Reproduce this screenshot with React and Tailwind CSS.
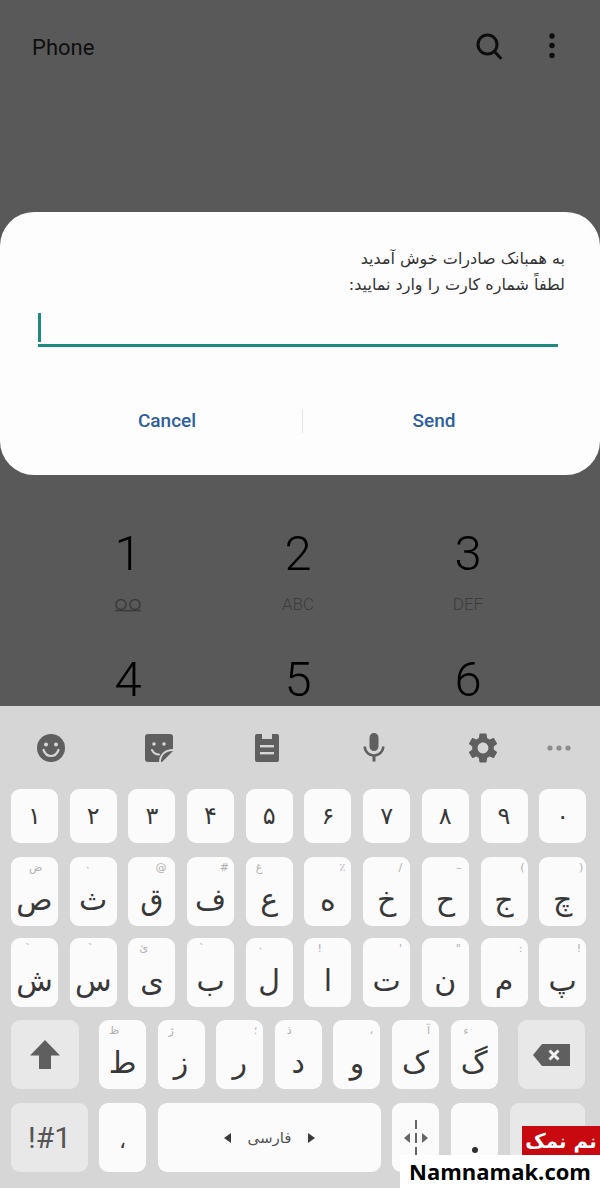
import React from "react";
import { MdSettings, MdMic } from "react-icons/md";

const AR = { fontFamily: '"DejaVu Sans", "Noto Sans", sans-serif' };
const RB = { fontFamily: 'Roboto, sans-serif' };

const nums = ["۱", "۲", "۳", "۴", "۵", "۶", "۷", "۸", "۹", "۰"];
const row2 = [
  ["ص", "ض", "left-[18px]"], ["ث", "۰", "left-[15px]"], ["ق", "@", "right-[9px]"], ["ف", "#", "right-[5px]"], ["ع", "غ", "left-[10px]"],
  ["ه", "٪", "right-[6px]"], ["خ", "/", "right-[8px]"], ["ح", "–", "right-[7px]"], ["ج", "(", "right-[3px]"], ["چ", ")", "right-[3px]"],
];
const row3 = [
  ["ش", "`", "left-[14px]"], ["س", "`", "left-[18px]"], ["ی", "ئ", "left-[11px]"], ["ب", "`", "left-[12px]"], ["ل", "·", "left-[13px]"],
  ["ا", "!", "left-[13px]"], ["ت", "'", "right-[8px]"], ["ن", '"', "right-[8px]"], ["م", ":", "right-[5px]"], ["پ", "!", "right-[5px]"],
];
const row4 = [
  ["ط", "ظ", "left-[10px]"], ["ز", "ژ", "left-[11px]"], ["ر", "؛", "right-[6px]"], ["د", "ذ", "left-[12px]"],
  ["و", "،", "right-[7px]"], ["ک", "آ", "right-[9px]"], ["گ", "ء", "left-[13px]"],
];

function Key({ m, s, sp }) {
  return (
    <div className="relative flex h-[69px] w-[47px] shrink-0 items-end justify-center rounded-[9px] bg-[#fbfbfb] pb-[6px] text-[30px] leading-[40px] text-[#383838]" style={AR}>
      <span className={"absolute top-[2px] text-[11px] leading-[18px] text-[#b0b0b0] " + sp}>{s}</span>
      <span>{m}</span>
    </div>
  );
}

function Dial({ d, sub, icon }) {
  return (
    <div className="flex h-[126px] w-[170px] flex-col items-center">
      <div className="h-[52px] text-[49px] font-light leading-[52px] text-black" style={RB}>{d}</div>
      <div className="mt-[13px] flex h-[24px] items-center text-[17px] font-light text-[#3c3c3c]" style={RB}>
        {icon ? (
          <svg className="h-[14px] w-[28px]" viewBox="0 0 28 14" fill="none" stroke="#3c3c3c" strokeWidth="1.6">
            <circle cx="7" cy="6.5" r="5" />
            <circle cx="21" cy="6.5" r="5" />
            <path d="M1 12.6h26" />
          </svg>
        ) : sub}
      </div>
    </div>
  );
}

export default function App() {
  return (
    <div className="relative flex h-[1188px] w-[600px] flex-col overflow-hidden bg-[#595959]">
      <div className="flex h-[706px] flex-col overflow-hidden">
        <header className="flex h-[212px] shrink-0 items-start pt-[34px] pl-[32px]">
          <span className="text-[22px] leading-[28px] text-[#0f0f0f]" style={RB}>Phone</span>
          <svg className="ml-[380px] mt-[-2px] h-[30px] w-[30px]" viewBox="0 0 30 30" fill="none" stroke="#0d0d0d" strokeWidth="3" strokeLinecap="round">
            <circle cx="13.5" cy="12.5" r="9.5" />
            <path d="M20.5 19.5l6 6.5" />
          </svg>
          <svg className="ml-[45px] mt-[-1px] h-[26px] w-[6px]" viewBox="0 0 6 26" fill="#0d0d0d">
            <circle cx="3" cy="3" r="2.7" />
            <circle cx="3" cy="12.5" r="2.7" />
            <circle cx="3" cy="22.5" r="2.7" />
          </svg>
        </header>

        <section className="flex h-[263px] shrink-0 flex-col rounded-[34px] bg-[#fdfdfd]">
          <div dir="rtl" className="pt-[34px] pr-[35px] text-[16px] leading-[26px] text-[#333333]" style={AR}>
            <div>به همبانک صادرات خوش آمدید</div>
            <div>لطفاً شماره کارت را وارد نمایید:</div>
          </div>
          <div className="mx-[38px] mt-[14px] mr-[42px] h-[35px] border-b-[3px] border-[#1f8a80]">
            <div className="mt-[1px] h-[29px] w-[3px] bg-[#1f8a80]" />
          </div>
          <div className="mt-[60px] flex items-center text-[19px] font-medium text-[#2f5f9e]" style={RB}>
            <div className="w-[302px] pl-[32px] text-center">Cancel</div>
            <div className="h-[23px] w-px bg-[#e2e2e2]" />
            <div className="flex-1 pr-[35px] text-center">Send</div>
          </div>
        </section>

        <section className="mt-[53px] grid grid-cols-[170px_170px_170px] justify-start pl-[43px]">
          <Dial d="1" icon />
          <Dial d="2" sub="ABC" />
          <Dial d="3" sub="DEF" />
          <Dial d="4" />
          <Dial d="5" />
          <Dial d="6" />
        </section>
      </div>

      <section className="flex flex-1 flex-col bg-[#d6d6d6]">
        <div className="flex h-[83px] shrink-0 items-center pl-[37px] text-[#5f5f5f]">
          <svg className="h-[28px] w-[28px]" viewBox="0 0 28 28">
            <circle cx="14" cy="14" r="14" fill="#5f5f5f" />
            <circle cx="9" cy="10.5" r="2" fill="#d6d6d6" />
            <circle cx="19" cy="10.5" r="2" fill="#d6d6d6" />
            <path d="M6.5 16c1.5 4 4.5 6 7.5 6s6-2 7.5-6" fill="none" stroke="#d6d6d6" strokeWidth="2.2" strokeLinecap="round" />
          </svg>
          <svg className="ml-[80px] h-[28px] w-[28px]" viewBox="0 0 28 28">
            <path d="M3 0h22a3 3 0 0 1 3 3v14L17 28H3a3 3 0 0 1-3-3V3a3 3 0 0 1 3-3z" fill="#5f5f5f" />
            <circle cx="9" cy="10" r="1.8" fill="#d6d6d6" />
            <circle cx="19" cy="10" r="1.8" fill="#d6d6d6" />
            <path d="M7 16c1.5 3 4 4.5 7 4.5" fill="none" stroke="#d6d6d6" strokeWidth="2" strokeLinecap="round" />
            <path d="M15 28c0-7 5-12 13-12" fill="none" stroke="#d6d6d6" strokeWidth="2" />
          </svg>
          <svg className="ml-[82px] h-[28px] w-[24px]" viewBox="0 0 24 28">
            <path d="M2 0h5v5h10V0h5a2 2 0 0 1 2 2v24a2 2 0 0 1-2 2H2a2 2 0 0 1-2-2V2a2 2 0 0 1 2-2z" fill="#5f5f5f" />
            <rect x="5" y="11" width="14" height="2.4" fill="#d6d6d6" />
            <rect x="5" y="18" width="14" height="2.4" fill="#d6d6d6" />
          </svg>
          <MdMic className="ml-[77px] h-[36px] w-[36px]" />
          <MdSettings className="ml-[73px] h-[36px] w-[36px]" />
          <svg className="ml-[46px] h-[6px] w-[24px]" viewBox="0 0 24 6" fill="#8c8c8c">
            <circle cx="3" cy="3" r="2.6" />
            <circle cx="12" cy="3" r="2.6" />
            <circle cx="21" cy="3" r="2.6" />
          </svg>
        </div>

        <div className="flex flex-col px-[11px]">
          <div className="flex h-[54px] gap-[11.7px]">
            {nums.map((n) => (
              <div key={n} className="flex h-[54px] w-[47px] items-center justify-center rounded-[9px] bg-[#fbfbfb] text-[24px] text-[#383838]" style={AR}>{n}</div>
            ))}
          </div>
          <div className="mt-[14px] flex gap-[11.7px]">
            {row2.map(([m, s, sp]) => <Key key={m} m={m} s={s} sp={sp} />)}
          </div>
          <div className="mt-[12px] flex gap-[11.7px]">
            {row3.map(([m, s, sp]) => <Key key={m} m={m} s={s} sp={sp} />)}
          </div>
          <div className="mt-[13px] flex">
            <div className="flex h-[69px] w-[68px] shrink-0 items-center justify-center rounded-[9px] bg-[#e8e8e8]">
              <svg className="h-[30px] w-[30px]" viewBox="0 0 30 30" fill="#5f5f5f">
                <path d="M15 0L30 15.5H21V29H9V15.5H0z" />
              </svg>
            </div>
            <div className="ml-[20px] flex gap-[11.6px]">
              {row4.map(([m, s, sp]) => <Key key={m} m={m} s={s} sp={sp} />)}
            </div>
            <div className="ml-[20px] flex h-[69px] w-[67px] shrink-0 items-center justify-center rounded-[9px] bg-[#e8e8e8]">
              <svg className="h-[22px] w-[37px]" viewBox="0 0 37 22">
                <path d="M9 0h28v22H9L0 11z" fill="#5f5f5f" />
                <path d="M16.5 6.5l9 9M25.5 6.5l-9 9" stroke="#f2f2f2" strokeWidth="3" />
              </svg>
            </div>
          </div>
          <div className="mt-[14px] flex">
            <div className="flex h-[69px] w-[77px] shrink-0 items-center justify-center rounded-[9px] bg-[#e8e8e8] text-[30px] text-[#555555]" style={RB}>
              <span dir="ltr">!#1</span>
            </div>
            <div className="ml-[11px] flex h-[69px] w-[47px] shrink-0 items-center justify-center rounded-[9px] bg-[#fbfbfb] pt-[6px] text-[22px] text-[#383838]" style={AR}>،</div>
            <div className="ml-[12px] flex h-[69px] w-[223px] shrink-0 items-center justify-center gap-[16px] rounded-[9px] bg-[#fbfbfb] text-[#555555]">
              <svg className="h-[10px] w-[7px]" viewBox="0 0 7 10" fill="#3a3a3a"><path d="M7 0v10L0 5z" /></svg>
              <span className="text-[15px] leading-[20px]" style={AR}>فارسی</span>
              <svg className="h-[10px] w-[7px]" viewBox="0 0 7 10" fill="#3a3a3a"><path d="M0 0v10l7-5z" /></svg>
            </div>
            <div className="ml-[11px] flex h-[69px] w-[47px] shrink-0 items-center justify-center rounded-[9px] bg-[#fbfbfb]">
              <svg className="h-[36px] w-[28px]" viewBox="0 0 28 36" fill="#666666">
                <rect x="13" y="0" width="2" height="9" />
                <rect x="13" y="13" width="2" height="10" />
                <rect x="13" y="27" width="2" height="9" />
                <path d="M8 13v10l-6-5z" />
                <path d="M20 13v10l6-5z" />
              </svg>
            </div>
            <div className="ml-[12px] flex h-[69px] w-[47px] shrink-0 items-end justify-center rounded-[9px] bg-[#fbfbfb] pb-[19px]">
              <div className="h-[6px] w-[6px] rounded-full bg-[#2e2e2e]" />
            </div>
            <div className="ml-[12px] h-[69px] w-[75px] shrink-0 rounded-[9px] bg-[#e8e8e8]" />
          </div>
        </div>
      </section>

      <div className="absolute right-0 bottom-[33px] flex h-[29px] w-[78px] items-center justify-center bg-[#c8090f] text-[20px] font-bold leading-none text-white" style={AR} dir="rtl">نم نمک</div>
      <div className="absolute right-0 bottom-0 flex h-[33px] w-[200px] items-center justify-center bg-white text-[22px] font-bold text-black" style={{ fontFamily: '"Open Sans", sans-serif' }}>Namnamak.com</div>
    </div>
  );
}
